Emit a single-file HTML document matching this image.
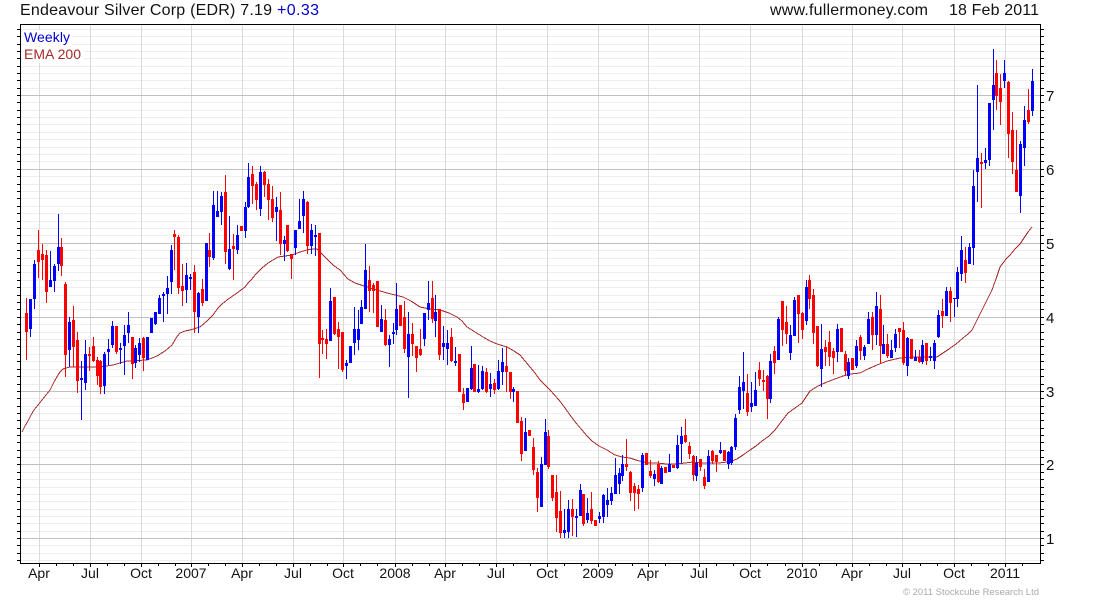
<!DOCTYPE html>
<html><head><meta charset="utf-8"><title>Endeavour Silver Corp</title>
<style>html,body{margin:0;padding:0;background:#fff;width:1100px;height:600px;overflow:hidden}svg{display:block}text{font-family:"Liberation Sans",Arial,sans-serif}</style>
</head><body>
<svg width="1100" height="600" viewBox="0 0 1100 600" xmlns="http://www.w3.org/2000/svg">
<rect width="1100" height="600" fill="#fff"/>
<g shape-rendering="crispEdges" fill="none" stroke-width="1">
<path stroke="#eeeeee" d="M21 29.5h1019M21 36.5h1019M21 44.5h1019M21 51.5h1019M21 58.5h1019M21 66.5h1019M21 73.5h1019M21 80.5h1019M21 88.5h1019M21 102.5h1019M21 110.5h1019M21 117.5h1019M21 124.5h1019M21 132.5h1019M21 139.5h1019M21 147.5h1019M21 154.5h1019M21 161.5h1019M21 176.5h1019M21 184.5h1019M21 191.5h1019M21 198.5h1019M21 206.5h1019M21 213.5h1019M21 221.5h1019M21 228.5h1019M21 235.5h1019M21 250.5h1019M21 258.5h1019M21 265.5h1019M21 272.5h1019M21 280.5h1019M21 287.5h1019M21 295.5h1019M21 302.5h1019M21 309.5h1019M21 324.5h1019M21 332.5h1019M21 339.5h1019M21 346.5h1019M21 354.5h1019M21 361.5h1019M21 369.5h1019M21 376.5h1019M21 384.5h1019M21 398.5h1019M21 406.5h1019M21 413.5h1019M21 420.5h1019M21 428.5h1019M21 435.5h1019M21 442.5h1019M21 450.5h1019M21 457.5h1019M21 472.5h1019M21 479.5h1019M21 487.5h1019M21 494.5h1019M21 501.5h1019M21 509.5h1019M21 516.5h1019M21 523.5h1019M21 531.5h1019M21 545.5h1019M21 553.5h1019M21 560.5h1019"/>
<path stroke="#dadada" d="M39.5 25v538M90.5 25v538M141.5 25v538M191.5 25v538M242.5 25v538M293.5 25v538M343.5 25v538M395.5 25v538M445.5 25v538M496.5 25v538M547.5 25v538M598.5 25v538M648.5 25v538M699.5 25v538M750.5 25v538M802.5 25v538M852.5 25v538M902.5 25v538M954.5 25v538M1005.5 25v538"/>
<path stroke="#c0c0c0" d="M21 95.5h1019M21 169.5h1019M21 243.5h1019M21 317.5h1019M21 391.5h1019M21 464.5h1019M21 538.5h1019"/>
<rect x="23" y="30" width="49" height="16" fill="#fff" stroke="none"/>
<rect x="23" y="47" width="61" height="16" fill="#fff" stroke="none"/>
<path stroke="#000" d="M20.5 24.5H1040.5V563.5H20.5Z"/>
<path stroke="#000" d="M17 29.5h3M17 36.5h3M17 44.5h3M17 51.5h3M17 58.5h3M17 66.5h3M17 73.5h3M17 80.5h3M17 88.5h3M17 95.5h3M17 102.5h3M17 110.5h3M17 117.5h3M17 124.5h3M17 132.5h3M17 139.5h3M17 147.5h3M17 154.5h3M17 161.5h3M17 169.5h3M17 176.5h3M17 184.5h3M17 191.5h3M17 198.5h3M17 206.5h3M17 213.5h3M17 221.5h3M17 228.5h3M17 235.5h3M17 243.5h3M17 250.5h3M17 258.5h3M17 265.5h3M17 272.5h3M17 280.5h3M17 287.5h3M17 295.5h3M17 302.5h3M17 309.5h3M17 317.5h3M17 324.5h3M17 332.5h3M17 339.5h3M17 346.5h3M17 354.5h3M17 361.5h3M17 369.5h3M17 376.5h3M17 384.5h3M17 391.5h3M17 398.5h3M17 406.5h3M17 413.5h3M17 420.5h3M17 428.5h3M17 435.5h3M17 442.5h3M17 450.5h3M17 457.5h3M17 464.5h3M17 472.5h3M17 479.5h3M17 487.5h3M17 494.5h3M17 501.5h3M17 509.5h3M17 516.5h3M17 523.5h3M17 531.5h3M17 538.5h3M17 545.5h3M17 553.5h3M17 560.5h3"/>
<path stroke="#000" d="M1041 29.5h3M1041 36.5h3M1041 44.5h3M1041 51.5h3M1041 58.5h3M1041 66.5h3M1041 73.5h3M1041 80.5h3M1041 88.5h3M1041 95.5h3M1041 102.5h3M1041 110.5h3M1041 117.5h3M1041 124.5h3M1041 132.5h3M1041 139.5h3M1041 147.5h3M1041 154.5h3M1041 161.5h3M1041 169.5h3M1041 176.5h3M1041 184.5h3M1041 191.5h3M1041 198.5h3M1041 206.5h3M1041 213.5h3M1041 221.5h3M1041 228.5h3M1041 235.5h3M1041 243.5h3M1041 250.5h3M1041 258.5h3M1041 265.5h3M1041 272.5h3M1041 280.5h3M1041 287.5h3M1041 295.5h3M1041 302.5h3M1041 309.5h3M1041 317.5h3M1041 324.5h3M1041 332.5h3M1041 339.5h3M1041 346.5h3M1041 354.5h3M1041 361.5h3M1041 369.5h3M1041 376.5h3M1041 384.5h3M1041 391.5h3M1041 398.5h3M1041 406.5h3M1041 413.5h3M1041 420.5h3M1041 428.5h3M1041 435.5h3M1041 442.5h3M1041 450.5h3M1041 457.5h3M1041 464.5h3M1041 472.5h3M1041 479.5h3M1041 487.5h3M1041 494.5h3M1041 501.5h3M1041 509.5h3M1041 516.5h3M1041 523.5h3M1041 531.5h3M1041 538.5h3M1041 545.5h3M1041 553.5h3M1041 560.5h3"/>
<path stroke="#000" d="M39.5 564v3M56.5 564v2M73.5 564v2M90.5 564v3M107.5 564v2M124.5 564v2M141.5 564v3M158.5 564v2M175.5 564v2M191.5 564v3M208.5 564v2M225.5 564v2M242.5 564v3M259.5 564v2M276.5 564v2M293.5 564v3M310.5 564v2M327.5 564v2M343.5 564v3M360.5 564v2M377.5 564v2M395.5 564v3M412.5 564v2M429.5 564v2M445.5 564v3M462.5 564v2M479.5 564v2M496.5 564v3M513.5 564v2M530.5 564v2M547.5 564v3M564.5 564v2M581.5 564v2M598.5 564v3M615.5 564v2M632.5 564v2M648.5 564v3M665.5 564v2M682.5 564v2M699.5 564v3M716.5 564v2M733.5 564v2M750.5 564v3M767.5 564v2M785.5 564v2M802.5 564v3M819.5 564v2M836.5 564v2M852.5 564v3M869.5 564v2M886.5 564v2M902.5 564v3M920.5 564v2M937.5 564v2M954.5 564v3M971.5 564v2M988.5 564v2M1005.5 564v3M1022.5 564v2"/>
</g>
<polyline fill="none" stroke="#a52a2a" stroke-width="1" shape-rendering="crispEdges" points="22,432 25,426 28,421 31,415 34,410 38,405 42,400 46,395 50,390 54,382 58,375 60,372 63,369 66,368 70,367 80,367 90,367 100,367 113,365 127,361 147,360 157,356 165,351 172,345 176,338 180,333 185,331 190,330 200,327 207,321 213,315 218,308 222,304 227,300 237,293 245,287 248,283 251,280 256,274 262,268 268,263 273,260 278,257 285,256 292,255 300,252 307,250 312,249 317,249 322,254 327,259 333,265 340,270 348,279 355,283 361,285 367,287 377,290 387,293 395,295 403,297 411,301 420,307 430,309 440,310 449,313 457,317 462,321 467,327 475,332 483,337 490,341 497,344 507,347 514,351 520,355 525,361 530,367 535,373 540,380 550,390 559,400 565,408 570,415 576,423 582,430 587,436 592,441 599,446 607,450 615,455 622,457 630,458 636,460 643,462 650,463 657,463 667,464 677,464 685,463 693,462 701,463 710,463 719,463 727,462 732,461 737,459 743,455 750,450 756,446 762,441 769,436 775,430 781,422 788,413 795,408 802,403 806,397 810,391 818,386 827,382 835,379 843,376 851,374 860,373 868,369 877,365 882,363 887,361 900,358 913,357 925,357 937,357 943,353 949,349 956,344 963,338 968,334 972,330 977,320 982,310 987,300 992,290 996,279 1000,267 1003,263 1006,259 1010,255 1015,249 1020,244 1024,238 1028,232 1032,227"/>
<g shape-rendering="crispEdges" fill="none">
<path stroke="#ff0000" stroke-width="1" d="M26.5 298V360M38.5 230V278M42.5 244V280M46.5 250V303M61.5 238V276M65.5 282V377M73.5 306V367M77.5 332V393M89.5 347V371M93.5 337V362M97.5 357V385M100.5 360V394M116.5 326V354M132.5 337V379M143.5 337V371M174.5 230V270M178.5 235V294M182.5 264V306M194.5 265V333M202.5 279V306M209.5 233V267M225.5 175V264M233.5 234V280M252.5 166V204M256.5 182V210M264.5 171V197M268.5 179V220M272.5 186V222M280.5 192V255M287.5 225V252M291.5 254V279M307.5 201V254M319.5 233V378M322.5 330V354M326.5 329V359M334.5 297V335M338.5 322V369M342.5 332V372M369.5 266V312M373.5 283V313M385.5 309V346M404.5 301V353M412.5 323V356M416.5 346V372M420.5 329V356M432.5 281V323M439.5 309V360M451.5 328V362M463.5 388V410M486.5 368V393M494.5 379V394M506.5 347V392M510.5 372V399M521.5 417V461M533.5 438V475M537.5 468V512M548.5 430V469M552.5 475V501M556.5 475V532M560.5 491V538M572.5 499V536M583.5 494V526M591.5 492V524M626.5 439V471M630.5 471V501M634.5 483V511M638.5 485V509M650.5 460V478M658.5 461V483M689.5 442V459M685.5 419V443M693.5 455V481M700.5 459V471M704.5 469V489M712.5 450V464M716.5 455V472M747.5 374V416M759.5 362V386M763.5 370V391M767.5 375V419M774.5 346V374M782.5 301V346M786.5 306V344M798.5 295V343M802.5 312V339M809.5 275V309M813.5 289V344M817.5 326V367M825.5 340V366M829.5 331V366M833.5 348V374M845.5 351V376M860.5 335V360M872.5 312V350M880.5 295V364M887.5 334V358M899.5 328V348M903.5 322V365M919.5 350V363M926.5 343V365M942.5 299V328M950.5 287V322M965.5 247V283M981.5 153V208M996.5 60V110M1000.5 74V125M1008.5 81V158M1012.5 112V174M1016.5 130V192M1028.5 89V124"/>
<path stroke="#ff0000" stroke-width="3" d="M26.5 313V332M38.5 250V262M42.5 254V260M46.5 255V292M61.5 247V266M65.5 284V355M73.5 320V347M77.5 340V381M89.5 354V356M93.5 346V361M97.5 360V376M100.5 361V387M116.5 326V352M132.5 337V364M143.5 338V358M174.5 234V237M178.5 237V288M182.5 286V291M194.5 272V312M202.5 289V303M209.5 250V257M225.5 192V252M233.5 246V249M241.5 226V231M252.5 174V186M256.5 184V200M264.5 172V185M268.5 184V200M272.5 199V218M280.5 210V244M287.5 225V251M291.5 254V259M307.5 202V246M319.5 233V344M322.5 338V340M326.5 339V344M334.5 297V334M338.5 329V337M342.5 332V370M369.5 280V291M373.5 285V291M377.5 281V327M385.5 320V345M400.5 305V326M404.5 317V349M412.5 334V344M416.5 346V358M420.5 349V355M432.5 298V319M439.5 309V355M451.5 337V361M459.5 354V392M463.5 394V403M474.5 364V392M486.5 372V392M494.5 383V390M506.5 366V372M510.5 372V392M517.5 391V423M521.5 421V454M529.5 430V436M533.5 447V470M537.5 472V498M548.5 436V467M552.5 475V498M556.5 492V518M560.5 511V533M572.5 509V517M583.5 494V524M591.5 509V521M595.5 520V526M626.5 464V467M630.5 472V493M634.5 486V493M638.5 489V494M646.5 453V465M650.5 471V476M658.5 464V482M665.5 467V473M673.5 465V468M685.5 435V442M689.5 446V454M693.5 456V475M700.5 459V467M704.5 477V486M712.5 451V461M716.5 455V462M724.5 450V461M747.5 393V412M759.5 370V379M763.5 380V382M767.5 376V399M774.5 351V363M782.5 301V330M786.5 322V334M798.5 295V314M802.5 313V330M809.5 280V299M813.5 295V333M817.5 326V366M825.5 347V352M829.5 342V357M833.5 351V358M841.5 328V352M845.5 354V371M852.5 358V370M860.5 337V351M872.5 317V335M880.5 309V346M887.5 344V356M899.5 328V332M903.5 330V363M911.5 339V359M919.5 357V362M926.5 343V361M942.5 311V316M950.5 291V303M965.5 260V273M981.5 162V164M996.5 73V96M1000.5 88V102M1008.5 82V134M1012.5 130V162M1016.5 170V192M1028.5 110V122"/>
<path stroke="#0000ff" stroke-width="1" d="M30.5 299V337M34.5 260V309M50.5 251V287M54.5 264V292M58.5 214V271M69.5 317V367M81.5 361V420M85.5 340V390M104.5 352V394M108.5 339V365M112.5 321V348M120.5 343V364M124.5 325V375M128.5 312V343M135.5 345V368M139.5 338V362M155.5 312V325M159.5 295V314M163.5 292V322M167.5 276V314M171.5 245V294M186.5 263V303M190.5 274V290M198.5 292V333M206.5 243V301M213.5 191V260M217.5 191V217M221.5 192V225M229.5 216V270M237.5 225V254M245.5 202V238M248.5 163V208M260.5 166V216M276.5 197V241M284.5 236V261M295.5 230V255M299.5 199V229M303.5 191V233M311.5 224V254M315.5 225V256M330.5 288V341M346.5 360V379M354.5 307V355M358.5 310V350M361.5 300V324M365.5 244V309M381.5 305V332M389.5 335V367M393.5 323V344M396.5 283V335M408.5 312V398M424.5 313V346M428.5 281V320M435.5 295V337M443.5 326V360M447.5 330V365M455.5 347V366M471.5 346V390M478.5 365V393M482.5 366V390M490.5 373V397M498.5 360V390M502.5 348V385M513.5 387V402M525.5 418V451M541.5 457V507M545.5 419V465M564.5 509V538M568.5 500V538M576.5 509V537M580.5 484V516M587.5 498V523M599.5 512V523M603.5 494V523M607.5 488V517M611.5 487V505M615.5 458V494M619.5 468V494M622.5 455V481M642.5 453V492M654.5 470V486M661.5 466V484M669.5 454V472M677.5 435V469M681.5 427V463M696.5 456V481M708.5 450V482M720.5 442V454M728.5 451V469M731.5 446V465M735.5 414V450M739.5 376V414M743.5 352V409M751.5 382V412M755.5 372V406M770.5 354V403M778.5 317V360M790.5 325V360M794.5 297V336M806.5 280V325M821.5 324V387M837.5 324V362M848.5 358V379M856.5 340V368M864.5 345V360M868.5 312V344M876.5 292V345M883.5 325V354M891.5 340V358M895.5 329V352M907.5 337V376M915.5 350V361M922.5 340V364M930.5 347V361M934.5 340V369M938.5 310V338M946.5 287V316M954.5 298V317M957.5 267V307M961.5 236V281M969.5 243V264M973.5 170V265M977.5 85V202M985.5 148V169M989.5 103V166M993.5 49V130M1004.5 60V88M1020.5 141V213M1024.5 106V166M1032.5 69V116"/>
<path stroke="#0000ff" stroke-width="3" d="M30.5 299V329M34.5 264V299M50.5 280V287M54.5 266V281M58.5 247V264M69.5 322V350M81.5 378V380M85.5 354V383M104.5 354V386M108.5 349V352M112.5 326V345M120.5 348V350M124.5 335V346M128.5 325V333M135.5 348V363M139.5 343V355M147.5 337V360M151.5 318V333M155.5 312V324M159.5 298V314M163.5 294V296M167.5 288V294M171.5 250V282M186.5 275V290M190.5 277V279M198.5 293V317M206.5 243V301M213.5 205V258M217.5 211V217M221.5 196V212M229.5 249V269M237.5 235V250M245.5 207V231M248.5 177V207M260.5 172V209M276.5 207V212M284.5 240V244M295.5 230V248M299.5 221V229M303.5 199V216M311.5 230V246M315.5 235V237M330.5 301V341M346.5 363V366M350.5 346V363M354.5 329V343M358.5 329V340M361.5 307V324M365.5 270V309M381.5 319V332M389.5 339V345M393.5 332V334M396.5 309V330M408.5 334V357M424.5 313V339M428.5 303V310M435.5 312V321M443.5 343V347M447.5 343V349M455.5 361V363M467.5 388V402M471.5 368V389M478.5 389V392M482.5 371V389M490.5 384V389M498.5 371V389M502.5 362V372M513.5 389V392M525.5 432V451M541.5 464V507M545.5 432V465M564.5 530V533M568.5 509V532M576.5 516V518M580.5 490V516M587.5 513V520M599.5 516V519M603.5 495V517M607.5 500V505M611.5 493V501M615.5 475V494M619.5 473V484M622.5 464V476M642.5 455V488M654.5 474V479M661.5 468V484M669.5 464V472M677.5 445V468M681.5 436V444M696.5 463V476M708.5 456V482M720.5 450V453M728.5 452V464M731.5 447V463M735.5 418V447M739.5 387V410M743.5 382V391M751.5 403V407M755.5 390V406M770.5 361V399M778.5 319V360M790.5 335V353M794.5 300V336M806.5 287V321M821.5 349V369M837.5 329V352M848.5 362V376M856.5 346V366M864.5 347V356M868.5 319V344M876.5 306V335M883.5 344V354M891.5 350V358M895.5 334V348M907.5 338V366M915.5 357V361M922.5 345V362M930.5 356V358M934.5 343V361M938.5 315V337M946.5 291V316M954.5 298V299M957.5 272V299M961.5 250V274M969.5 247V264M973.5 186V248M977.5 158V172M985.5 160V163M989.5 103V160M993.5 85V100M1004.5 73V81M1020.5 144V196M1024.5 120V148M1032.5 81V111"/>
</g>
<text x="20" y="15" font-size="16" fill="#111" textLength="252" lengthAdjust="spacing">Endeavour Silver Corp (EDR) 7.19</text>
<text x="277" y="15" font-size="16" fill="#0000cc" textLength="42" lengthAdjust="spacing">+0.33</text>
<text x="770" y="15" font-size="16" fill="#111" textLength="158" lengthAdjust="spacing">www.fullermoney.com</text>
<text x="949" y="15" font-size="16" fill="#111" textLength="90" lengthAdjust="spacing">18 Feb 2011</text>
<text x="24" y="42" font-size="14" fill="#0000cc" textLength="46" lengthAdjust="spacing">Weekly</text>
<text x="24" y="59" font-size="14" fill="#a52a2a" textLength="57" lengthAdjust="spacing">EMA 200</text>
<g font-size="15" fill="#111">
<text x="1046" y="101">7</text><text x="1046" y="175">6</text><text x="1046" y="249">5</text><text x="1046" y="323">4</text><text x="1046" y="397">3</text><text x="1046" y="470">2</text><text x="1046" y="544">1</text>
</g>
<g font-size="14" fill="#111" text-anchor="middle">
<text x="39" y="578">Apr</text><text x="90" y="578">Jul</text><text x="141" y="578">Oct</text><text x="191" y="578">2007</text><text x="242" y="578">Apr</text><text x="293" y="578">Jul</text><text x="343" y="578">Oct</text><text x="395" y="578">2008</text><text x="445" y="578">Apr</text><text x="496" y="578">Jul</text><text x="547" y="578">Oct</text><text x="598" y="578">2009</text><text x="648" y="578">Apr</text><text x="699" y="578">Jul</text><text x="750" y="578">Oct</text><text x="802" y="578">2010</text><text x="852" y="578">Apr</text><text x="902" y="578">Jul</text><text x="954" y="578">Oct</text><text x="1005" y="578">2011</text>
</g>
<text x="903" y="595" font-size="9.5" fill="#aaaaaa" textLength="136" lengthAdjust="spacing">© 2011 Stockcube Research Ltd</text>
</svg>
</body></html>
